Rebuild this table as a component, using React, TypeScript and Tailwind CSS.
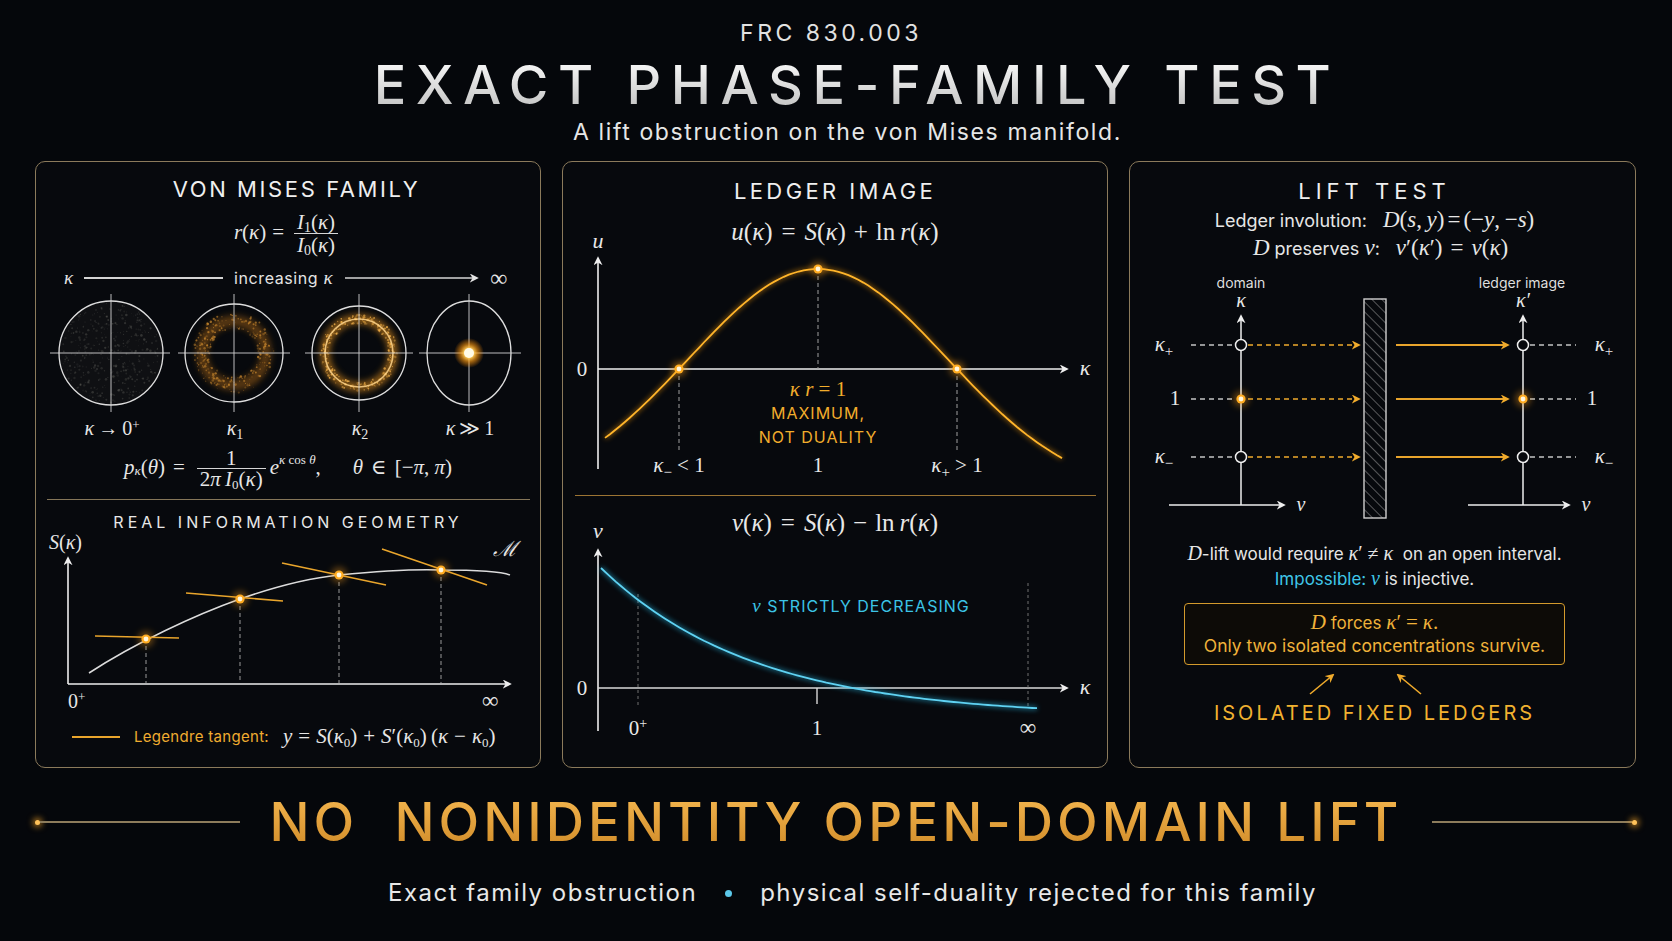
import React from "react";

const sans = "font-['Inter','DejaVu_Sans',sans-serif]";
const serif = "font-['Liberation_Serif','DejaVu_Serif',serif]";

function rng(seed: number) {
  let s = seed;
  return () => {
    s = (s * 16807) % 2147483647;
    return (s - 1) / 2147483646;
  };
}
const rand = rng(11);
const speck = (n: number, r0: number, spread: number, disc = false) =>
  Array.from({ length: n }, () => {
    const a = rand() * Math.PI * 2;
    const r = disc ? Math.sqrt(rand()) * r0 : r0 + (rand() - 0.5) * spread;
    return { x: Math.cos(a) * r, y: Math.sin(a) * r, o: 0.25 + rand() * 0.6, s: 0.4 + rand() * 0.9 };
  });
const noise = speck(420, 50, 0, true);
const ringA = speck(300, 32, 16);
const ringB = speck(260, 34, 9);

const uPath = Array.from({ length: 93 }, (_, i) => {
  const x = 43 + (i * 457) / 92;
  const d = x - 256;
  const y = 250 - 227 * Math.exp(-(d * d) / (2 * 129 * 129));
  return `${i ? "L" : "M"}${x.toFixed(1)} ${y.toFixed(1)}`;
}).join(" ");

const vPath = Array.from({ length: 90 }, (_, i) => {
  const x = 39 + (i * 436) / 89;
  const y = 180 - 149 * Math.exp(-0.0065 * (x - 39));
  return `${i ? "L" : "M"}${x.toFixed(1)} ${y.toFixed(1)}`;
}).join(" ");

// operator with math spacing
function Op({ children, w = 6 }: { children: React.ReactNode; w?: number }) {
  return <span style={{ margin: `0 ${w}px` }}>{children}</span>;
}

function Frac({ num, den, lh = 22 }: { num: React.ReactNode; den: React.ReactNode; lh?: number }) {
  return (
    <span className="inline-flex flex-col items-center mx-[4px]">
      <span className="px-[3px]" style={{ lineHeight: `${lh}px` }}>{num}</span>
      <span className="h-px w-full bg-[#d6d6d6]" />
      <span className="px-[3px]" style={{ lineHeight: `${lh}px` }}>{den}</span>
    </span>
  );
}

function Marker({ id, color }: { id: string; color: string }) {
  return (
    <marker id={id} viewBox="0 0 10 10" refX="8" refY="5" markerWidth="9" markerHeight="9" markerUnits="userSpaceOnUse" orient="auto">
      <path d="M0 0 L10 5 L0 10 L3 5 z" fill={color} />
    </marker>
  );
}

function Dot({ x, y }: { x: number; y: number }) {
  return (
    <g>
      <circle cx={x} cy={y} r="8" fill="#ffa21a" opacity="0.35" filter="url(#glow)" />
      <circle cx={x} cy={y} r="4.6" fill="#ffac22" />
      <circle cx={x} cy={y} r="2.4" fill="#fff6de" />
    </g>
  );
}

function VonMises() {
  return (
    <div className="w-[506px] h-[607px] shrink-0 rounded-[10px] border border-[#8b7a5b] bg-[#07090d] flex flex-col items-center">
      <div className="mt-[14px] ml-[17px] h-[26px] leading-[26px] text-[22px] tracking-[2.6px] text-[#efefef]">VON MISES FAMILY</div>
      <div className={`${serif} mt-[8px] h-[46px] flex items-center text-[21px] text-[#e6e6e6]`}>
        <i>r</i>(<i>κ</i>)<Op>=</Op>
        <Frac
          num={<><i>I</i><sub className="text-[14px]">1</sub>(<i>κ</i>)</>}
          den={<><i>I</i><sub className="text-[14px]">0</sub>(<i>κ</i>)</>}
        />
      </div>
      <div className="mt-[12px] h-[20px] w-full pl-[28px] flex items-center text-[#e4e4e4]">
        <span className={`${serif} italic text-[19px] w-[12px]`}>κ</span>
        <span className="ml-[8px] w-[139px] h-[1.5px] bg-[#d4d4d4]" />
        <span className="ml-[11px] text-[16px] tracking-[0.6px] whitespace-nowrap">
          increasing <i className={`${serif} text-[19px]`}>κ</i>
        </span>
        <svg width="136" height="12" className="ml-[12px]">
          <defs>
            <Marker id="inc" color="#e4e4e4" />
          </defs>
          <line x1="0" y1="6" x2="132" y2="6" stroke="#d4d4d4" strokeWidth="1.5" markerEnd="url(#inc)" />
        </svg>
        <span className={`${serif} ml-[9px] text-[24px] leading-[20px]`}>∞</span>
      </div>
      <svg width="506" height="120" className="mt-[5px]">
        <defs>
          <filter id="soft" x="-50%" y="-50%" width="200%" height="200%">
            <feGaussianBlur stdDeviation="3" />
          </filter>
          <filter id="glow" x="-100%" y="-100%" width="300%" height="300%">
            <feGaussianBlur stdDeviation="3" />
          </filter>
          <radialGradient id="sun">
            <stop offset="0" stopColor="#fff8e0" />
            <stop offset="0.3" stopColor="#ffd060" />
            <stop offset="0.6" stopColor="#ff9a10" stopOpacity="0.6" />
            <stop offset="1" stopColor="#ff8a00" stopOpacity="0" />
          </radialGradient>
        </defs>
        <g transform="translate(76 60)">
          <circle r="52" fill="#0f1013" />
          {noise.map((p, i) => (
            <circle key={i} cx={p.x} cy={p.y} r={p.s} fill="#8a8a80" opacity={p.o * 0.35} />
          ))}
          <line x1="-61" x2="59" y1="0" y2="0" stroke="#d2d2d2" strokeWidth="0.9" />
          <line x1="0" x2="0" y1="-59" y2="59" stroke="#d2d2d2" strokeWidth="0.9" />
          <circle r="52" fill="none" stroke="#dedede" strokeWidth="1.3" />
        </g>
        <g transform="translate(199 60)">
          <circle r="32" fill="none" stroke="#b86e12" strokeWidth="11" opacity="0.45" filter="url(#soft)" />
          {ringA.map((p, i) => (
            <circle key={i} cx={p.x} cy={p.y} r={p.s} fill="#e39a34" opacity={p.o * 0.75} />
          ))}
          <line x1="-56" x2="56" y1="0" y2="0" stroke="#d2d2d2" strokeWidth="0.9" />
          <line x1="0" x2="0" y1="-59" y2="59" stroke="#d2d2d2" strokeWidth="0.9" />
          <circle r="49" fill="none" stroke="#dedede" strokeWidth="1.3" />
        </g>
        <g transform="translate(324 60)">
          <circle r="34" fill="none" stroke="#d98a1a" strokeWidth="10" opacity="0.6" filter="url(#soft)" />
          {ringB.map((p, i) => (
            <circle key={i} cx={p.x} cy={p.y} r={p.s} fill="#f5b24a" opacity={p.o} />
          ))}
          <circle r="34" fill="none" stroke="#ffd58a" strokeWidth="1.6" opacity="0.85" />
          <line x1="-54" x2="54" y1="0" y2="0" stroke="#d2d2d2" strokeWidth="0.9" />
          <line x1="0" x2="0" y1="-59" y2="59" stroke="#d2d2d2" strokeWidth="0.9" />
          <circle r="47" fill="none" stroke="#dedede" strokeWidth="1.3" />
        </g>
        <g transform="translate(434 60)">
          <line x1="-50" x2="52" y1="0" y2="0" stroke="#d2d2d2" strokeWidth="0.9" />
          <line x1="0" x2="0" y1="-59" y2="59" stroke="#d2d2d2" strokeWidth="0.9" />
          <ellipse rx="42" ry="52" fill="none" stroke="#dedede" strokeWidth="1.3" />
          <circle r="15" fill="url(#sun)" />
          <circle r="5" fill="#fffbe8" />
        </g>
      </svg>
      <div className={`${serif} mt-[4px] h-[22px] w-full pl-[26px] flex items-center text-[20px] text-[#e6e6e6]`}>
        <span className="w-[100px] text-center whitespace-nowrap">
          <i>κ</i><Op w={4}>→</Op>0<sup className="text-[13px]">+</sup>
        </span>
        <span className="ml-[23px] w-[100px] text-center">
          <i>κ</i><sub className="text-[14px]">1</sub>
        </span>
        <span className="ml-[25px] w-[100px] text-center">
          <i>κ</i><sub className="text-[14px]">2</sub>
        </span>
        <span className="ml-[10px] w-[100px] text-center whitespace-nowrap">
          <i>κ</i><Op w={4}>≫</Op>1
        </span>
      </div>
      <div className={`${serif} mt-[7px] h-[44px] flex items-center text-[21px] text-[#e6e6e6] whitespace-nowrap`}>
        <i>p</i><sub className="text-[13px] italic">κ</sub>(<i>θ</i>)<Op w={8}>=</Op>
        <Frac lh={20} num="1" den={<>2<i>π</i>&thinsp;<i>I</i><sub className="text-[13px]">0</sub>(<i>κ</i>)</>} />
        <i>e</i><sup className="text-[13px] -top-[8px]"><i>κ</i> cos <i>θ</i></sup>,
        <span className="w-[32px]" />
        <i>θ</i><Op w={8}>∈</Op>[−<i>π</i>,&nbsp;<i>π</i>)
      </div>
      <div className="mt-[9px] h-px w-[483px] bg-[#857659]" />
      <div className="mt-[12px] h-[20px] leading-[20px] text-[16px] tracking-[4px] text-[#e8e8e8]">REAL INFORMATION GEOMETRY</div>
      <svg width="506" height="185" overflow="visible">
        <defs>
          <Marker id="lw" color="#eeeeee" />
        </defs>
        <text x="14" y="17" className={serif} fontSize="20" fill="#e6e6e6">
          <tspan fontStyle="italic">S</tspan>(<tspan fontStyle="italic">κ</tspan>)
        </text>
        <text x="458" y="24" className={serif} fontSize="21" fontStyle="italic" fill="#e6e6e6">ℳ</text>
        <line x1="33" y1="152" x2="33" y2="26" stroke="#eeeeee" strokeWidth="1.6" markerEnd="url(#lw)" />
        <line x1="33" y1="152" x2="475" y2="152" stroke="#eeeeee" strokeWidth="1.6" markerEnd="url(#lw)" />
        <text x="33" y="176" className={serif} fontSize="20" fill="#e6e6e6">
          0<tspan dy="-7" fontSize="13">+</tspan>
        </text>
        <text x="447" y="176" className={serif} fontSize="23" fill="#e6e6e6">∞</text>
        {[
          [111, 107],
          [205, 67],
          [304, 43],
          [406, 38],
        ].map(([x, y]) => (
          <line key={x} x1={x} y1={y} x2={x} y2="151" stroke="#9a9a9a" strokeWidth="1" strokeDasharray="4 3" />
        ))}
        <path d="M54 141 C100 111 160 83 205 67 C245 53 275 46 304 43 C345 39 380 37 406 38 C440 38 465 39 475 43" fill="none" stroke="#dcdcdc" strokeWidth="1.5" />
        {[
          [60, 104, 144, 106],
          [151, 61, 248, 69],
          [247, 31, 351, 53],
          [347, 17, 452, 53],
        ].map(([a, b, c, d]) => (
          <line key={a} x1={a} y1={b} x2={c} y2={d} stroke="#e9a52c" strokeWidth="1.6" />
        ))}
        <Dot x={111} y={107} />
        <Dot x={205} y={67} />
        <Dot x={304} y={43} />
        <Dot x={406} y={38} />
      </svg>
      <div className="mt-[9px] h-[22px] w-full pl-[36px] flex items-center whitespace-nowrap">
        <span className="w-[48px] h-[1.6px] bg-[#e9a52c]" />
        <span className="ml-[14px] text-[15px] tracking-[0.3px] text-[#f0ac30]">Legendre tangent:</span>
        <span className={`${serif} ml-[14px] text-[21px] text-[#e6e6e6]`}>
          <i>y</i><Op w={6}>=</Op><i>S</i>(<i>κ</i><sub className="text-[13px]">0</sub>)<Op w={6}>+</Op><i>S</i>′(<i>κ</i><sub className="text-[13px]">0</sub>)&thinsp;(<i>κ</i><Op w={6}>−</Op><i>κ</i><sub className="text-[13px]">0</sub>)
        </span>
      </div>
    </div>
  );
}

function Ledger() {
  return (
    <div className="w-[546px] h-[607px] shrink-0 rounded-[10px] border border-[#8b7a5b] bg-[#07090d] flex flex-col items-center">
      <div className="mt-[16px] h-[26px] leading-[26px] text-[22px] tracking-[3.4px] text-[#efefef]">LEDGER IMAGE</div>
      <div className={`${serif} mt-[14px] h-[28px] leading-[28px] text-[25px] text-[#e8e8e8] whitespace-nowrap`}>
        <i>u</i>(<i>κ</i>)<Op w={9}>=</Op><i>S</i>(<i>κ</i>)<Op w={8}>+</Op>ln&thinsp;<i>r</i>(<i>κ</i>)
      </div>
      <svg width="546" height="230" overflow="visible">
        <defs>
          <Marker id="mw" color="#eeeeee" />
          <filter id="oglow" x="-20%" y="-20%" width="140%" height="140%">
            <feGaussianBlur stdDeviation="2.5" />
          </filter>
        </defs>
        <text x="36" y="2" textAnchor="middle" className={serif} fontSize="22" fontStyle="italic" fill="#e8e8e8">u</text>
        <line x1="36" y1="223" x2="36" y2="12" stroke="#eeeeee" strokeWidth="1.6" markerEnd="url(#mw)" />
        <line x1="36" y1="123" x2="505" y2="123" stroke="#eeeeee" strokeWidth="1.6" markerEnd="url(#mw)" />
        <text x="20" y="130" textAnchor="middle" className={serif} fontSize="21" fill="#e8e8e8">0</text>
        <text x="523" y="129" textAnchor="middle" className={serif} fontSize="22" fontStyle="italic" fill="#e8e8e8">κ</text>
        <line x1="117" y1="123" x2="117" y2="204" stroke="#a0a0a0" strokeWidth="1" strokeDasharray="4 3" />
        <line x1="256" y1="23" x2="256" y2="123" stroke="#a0a0a0" strokeWidth="1" strokeDasharray="4 3" />
        <line x1="395" y1="123" x2="395" y2="204" stroke="#a0a0a0" strokeWidth="1" strokeDasharray="4 3" />
        <path d={uPath} fill="none" stroke="#ff9f10" strokeWidth="4" opacity="0.45" filter="url(#oglow)" />
        <path d={uPath} fill="none" stroke="#ffb52a" strokeWidth="1.8" />
        <Dot x={117} y={123} />
        <Dot x={256} y={23} />
        <Dot x={395} y={123} />
        <text x="256" y="150" textAnchor="middle" className={serif} fontSize="21" fontStyle="italic" fill="#f2ad2c">
          κ r<tspan fontStyle="normal"> = 1</tspan>
        </text>
        <text x="256" y="173" textAnchor="middle" className={sans} fontSize="16" letterSpacing="1" fill="#f2ad2c">MAXIMUM,</text>
        <text x="256" y="197" textAnchor="middle" className={sans} fontSize="16" letterSpacing="1" fill="#f2ad2c">NOT DUALITY</text>
        <text x="117" y="226" textAnchor="middle" className={serif} fontSize="21" fill="#e8e8e8">
          <tspan fontStyle="italic">κ</tspan><tspan dy="5" fontSize="15">−</tspan><tspan dy="-5"> &lt; 1</tspan>
        </text>
        <text x="256" y="226" textAnchor="middle" className={serif} fontSize="21" fill="#e8e8e8">1</text>
        <text x="395" y="226" textAnchor="middle" className={serif} fontSize="21" fill="#e8e8e8">
          <tspan fontStyle="italic">κ</tspan><tspan dy="5" fontSize="15">+</tspan><tspan dy="-5"> &gt; 1</tspan>
        </text>
      </svg>
      <div className="mt-[19px] h-px w-[521px] bg-[#9c7433]" />
      <div className={`${serif} mt-[13px] h-[28px] leading-[28px] text-[25px] text-[#e8e8e8] whitespace-nowrap`}>
        <i>v</i>(<i>κ</i>)<Op w={9}>=</Op><i>S</i>(<i>κ</i>)<Op w={8}>−</Op>ln&thinsp;<i>r</i>(<i>κ</i>)
      </div>
      <svg width="546" height="215" overflow="visible">
        <defs>
          <Marker id="mw2" color="#eeeeee" />
          <filter id="cglow" x="-20%" y="-20%" width="140%" height="140%">
            <feGaussianBlur stdDeviation="2.5" />
          </filter>
        </defs>
        <text x="36" y="1" textAnchor="middle" className={serif} fontSize="22" fontStyle="italic" fill="#e8e8e8">v</text>
        <line x1="36" y1="194" x2="36" y2="13" stroke="#eeeeee" strokeWidth="1.6" markerEnd="url(#mw2)" />
        <line x1="36" y1="151" x2="505" y2="151" stroke="#d8d8d8" strokeWidth="1.6" markerEnd="url(#mw2)" />
        <text x="20" y="158" textAnchor="middle" className={serif} fontSize="21" fill="#e8e8e8">0</text>
        <text x="523" y="157" textAnchor="middle" className={serif} fontSize="22" fontStyle="italic" fill="#e8e8e8">κ</text>
        <line x1="255" y1="151" x2="255" y2="167" stroke="#d8d8d8" strokeWidth="1.4" />
        <line x1="76" y1="57" x2="76" y2="170" stroke="#8a8a8a" strokeWidth="0.8" strokeDasharray="3 3" />
        <line x1="466" y1="46" x2="466" y2="170" stroke="#8a8a8a" strokeWidth="0.8" strokeDasharray="3 3" />
        <path d={vPath} fill="none" stroke="#27c0ee" strokeWidth="4" opacity="0.5" filter="url(#cglow)" />
        <path d={vPath} fill="none" stroke="#5fd2f2" strokeWidth="1.8" />
        <text x="299" y="75" textAnchor="middle" className={sans} fontSize="16" letterSpacing="1" fill="#3cc4e6">
          <tspan className={serif} fontStyle="italic" fontSize="19">v</tspan> STRICTLY DECREASING
        </text>
        <text x="76" y="198" textAnchor="middle" className={serif} fontSize="21" fill="#e8e8e8">
          0<tspan dy="-7" fontSize="14">+</tspan>
        </text>
        <text x="255" y="198" textAnchor="middle" className={serif} fontSize="21" fill="#e8e8e8">1</text>
        <text x="466" y="198" textAnchor="middle" className={serif} fontSize="23" fill="#e8e8e8">∞</text>
      </svg>
    </div>
  );
}

function Lift() {
  const rows: [number, string, string][] = [
    [69, "κ", "+"],
    [123, "1", ""],
    [181, "κ", "−"],
  ];
  return (
    <div className="w-[507px] h-[607px] shrink-0 rounded-[10px] border border-[#8b7a5b] bg-[#07090d] flex flex-col items-center pr-[16px]">
      <div className="mt-[16px] h-[26px] leading-[26px] text-[22px] tracking-[5px] text-[#efefef]">LIFT TEST</div>
      <div className="mt-[4px] h-[24px] leading-[24px] text-[18px] text-[#e6e6e6] whitespace-nowrap">
        Ledger involution:<span className="inline-block w-[16px]" />
        <span className={`${serif} text-[23px]`}>
          <i>D</i>(<i>s</i>,&thinsp;<i>y</i>)<Op w={3}>=</Op>(−<i>y</i>,&thinsp;−<i>s</i>)
        </span>
      </div>
      <div className="mt-[4px] ml-[12px] h-[24px] leading-[24px] text-[18px] text-[#e6e6e6] whitespace-nowrap">
        <i className={`${serif} text-[23px]`}>D</i> preserves <i className={`${serif} text-[23px]`}>v</i>:<span className="inline-block w-[16px]" />
        <span className={`${serif} text-[23px]`}>
          <i>v</i>′(<i>κ</i>′)<Op w={8}>=</Op><i>v</i>(<i>κ</i>)
        </span>
      </div>
      <svg width="507" height="246" overflow="visible" className="mt-[16px] self-start">
        <defs>
          <Marker id="rw" color="#eeeeee" />
          <Marker id="ro" color="#f0ab2c" />
          <pattern id="hatch" width="7" height="7" patternUnits="userSpaceOnUse" patternTransform="rotate(-45)">
            <line x1="0" y1="0" x2="0" y2="7" stroke="#9a9a9a" strokeWidth="1.1" />
          </pattern>
        </defs>
        <text x="111" y="12" textAnchor="middle" className={sans} fontSize="14" fill="#dedede">domain</text>
        <text x="392" y="12" textAnchor="middle" className={sans} fontSize="14" fill="#dedede">ledger image</text>
        <text x="111" y="31" textAnchor="middle" className={serif} fontSize="20" fontStyle="italic" fill="#e8e8e8">κ</text>
        <text x="393" y="31" textAnchor="middle" className={serif} fontSize="20" fontStyle="italic" fill="#e8e8e8">κ′</text>
        <line x1="111" y1="229" x2="111" y2="40" stroke="#eeeeee" strokeWidth="1.5" markerEnd="url(#rw)" />
        <line x1="39" y1="229" x2="154" y2="229" stroke="#eeeeee" strokeWidth="1.5" markerEnd="url(#rw)" />
        <text x="171" y="235" textAnchor="middle" className={serif} fontSize="20" fontStyle="italic" fill="#e8e8e8">v</text>
        <line x1="393" y1="229" x2="393" y2="40" stroke="#eeeeee" strokeWidth="1.5" markerEnd="url(#rw)" />
        <line x1="338" y1="229" x2="439" y2="229" stroke="#eeeeee" strokeWidth="1.5" markerEnd="url(#rw)" />
        <text x="456" y="235" textAnchor="middle" className={serif} fontSize="20" fontStyle="italic" fill="#e8e8e8">v</text>
        <rect x="234" y="23" width="22" height="219" fill="url(#hatch)" stroke="#cfcfcf" strokeWidth="1.4" />
        {rows.map(([y, a, b], i) => (
          <g key={y}>
            <text x={i === 1 ? 45 : 34} y={y + 6} textAnchor="middle" className={serif} fontSize="21" fill="#e8e8e8">
              <tspan fontStyle={a === "κ" ? "italic" : "normal"}>{a}</tspan>
              {b && <tspan dy="5" fontSize="15">{b}</tspan>}
            </text>
            <line x1="61" y1={y} x2="105" y2={y} stroke="#c4c4c4" strokeWidth="1.3" strokeDasharray="5 4" />
            <line x1="118" y1={y} x2="229" y2={y} stroke="#f0ab2c" strokeWidth="1.5" strokeDasharray="5 4" markerEnd="url(#ro)" />
            <line x1="266" y1={y} x2="378" y2={y} stroke="#e9a52c" strokeWidth="2" markerEnd="url(#ro)" />
            <line x1="400" y1={y} x2="446" y2={y} stroke="#c4c4c4" strokeWidth="1.3" strokeDasharray="5 4" />
            <text x={i === 1 ? 462 : 474} y={y + 6} textAnchor="middle" className={serif} fontSize="21" fill="#e8e8e8">
              <tspan fontStyle={a === "κ" ? "italic" : "normal"}>{a}</tspan>
              {b && <tspan dy="5" fontSize="15">{b}</tspan>}
            </text>
            {i === 1 ? (
              <>
                <Dot x={111} y={y} />
                <Dot x={393} y={y} />
              </>
            ) : (
              <>
                <circle cx="111" cy={y} r="5.5" fill="#07090d" stroke="#eeeeee" strokeWidth="1.5" />
                <circle cx="393" cy={y} r="5.5" fill="#07090d" stroke="#eeeeee" strokeWidth="1.5" />
              </>
            )}
          </g>
        ))}
      </svg>
      <div className="mt-[20px] h-[22px] leading-[22px] text-[17px] text-[#e6e6e6] whitespace-nowrap">
        <i className={`${serif} text-[20px]`}>D</i>-lift would require{" "}
        <span className={`${serif} text-[20px]`}><i>κ</i>′<Op w={5}>≠</Op><i>κ</i></span>&nbsp; on an open interval.
      </div>
      <div className="mt-[3px] h-[22px] leading-[22px] text-[17px] text-[#e6e6e6] whitespace-nowrap">
        <span className="text-[#3fc6e8]">Impossible:&nbsp;</span>
        <i className={`${serif} text-[20px] text-[#3fc6e8]`}>v</i> is injective.
      </div>
      <div className="mt-[14px] h-[62px] w-[381px] rounded-[4px] border-[1.5px] border-[#d39a2c] bg-[#0d0b07] flex flex-col items-center justify-center text-[#f0b23a]">
        <div className="h-[24px] leading-[24px] text-[17px]">
          <i className={`${serif} text-[21px]`}>D</i> forces <span className={`${serif} text-[21px]`}><i>κ</i>′<Op w={5}>=</Op><i>κ</i>.</span>
        </div>
        <div className="h-[24px] leading-[24px] text-[17.5px] whitespace-nowrap">Only two isolated concentrations survive.</div>
      </div>
      <svg width="151" height="30" className="mt-[3px]">
        <defs>
          <Marker id="ra" color="#f0ab2c" />
        </defs>
        <line x1="11" y1="26" x2="34" y2="7" stroke="#f0ab2c" strokeWidth="1.6" markerEnd="url(#ra)" />
        <line x1="122" y1="26" x2="99" y2="7" stroke="#f0ab2c" strokeWidth="1.6" markerEnd="url(#ra)" />
      </svg>
      <div className="mt-[2px] h-[26px] leading-[26px] text-[20px] tracking-[3px] text-[#f2b230]">ISOLATED FIXED LEDGERS</div>
    </div>
  );
}

export default function App() {
  return (
    <div className={`w-[1672px] h-[941px] bg-[#05070b] flex flex-col items-center overflow-hidden ${sans} text-[#ececec]`}>
      <div className="mt-[19px] mr-[10px] h-[28px] leading-[28px] text-[23px] tracking-[3.5px] text-[#e2e2e2]">FRC 830.003</div>
      <div className="mt-[8px] ml-[42px] h-[60px] leading-[60px] text-[54px] font-medium tracking-[9.5px] bg-linear-to-b from-white to-[#bdbdbd] bg-clip-text text-transparent">
        EXACT PHASE-FAMILY TEST
      </div>
      <div className="mt-[3px] ml-[23px] h-[28px] leading-[28px] text-[23px] tracking-[1.6px] text-[#e6e6e6]">
        A lift obstruction on the von Mises manifold.
      </div>
      <div className="mt-[15px] w-full px-[35px] flex gap-[21px]">
        <VonMises />
        <Ledger />
        <Lift />
      </div>
      <div className="mt-[24px] w-full px-[35px] flex items-center justify-between">
        <div className="flex items-center">
          <span className="w-[5px] h-[5px] rounded-full bg-[#ffc25a] shadow-[0_0_6px_2px_rgba(255,170,40,0.7)]" />
          <span className="w-[200px] h-[2px] bg-[#8d7c5c]" />
        </div>
        <div className="h-[60px] leading-[60px] text-[53px] font-medium tracking-[4px] bg-linear-to-b from-[#f6b850] to-[#cf8a26] bg-clip-text text-transparent whitespace-pre">
          NO  NONIDENTITY OPEN-DOMAIN LIFT
        </div>
        <div className="flex items-center">
          <span className="w-[200px] h-[2px] bg-[#8d7c5c]" />
          <span className="w-[5px] h-[5px] rounded-full bg-[#ffc25a] shadow-[0_0_6px_2px_rgba(255,170,40,0.7)]" />
        </div>
      </div>
      <div className="mt-[26px] ml-[33px] h-[30px] leading-[30px] text-[24px] tracking-[1.5px] text-[#e8e8e8] flex items-center whitespace-nowrap">
        <span>Exact family obstruction</span>
        <span className="mx-[28px] w-[7px] h-[7px] rounded-full bg-[#5cc8ea]" />
        <span>physical self-duality rejected for this family</span>
      </div>
    </div>
  );
}
